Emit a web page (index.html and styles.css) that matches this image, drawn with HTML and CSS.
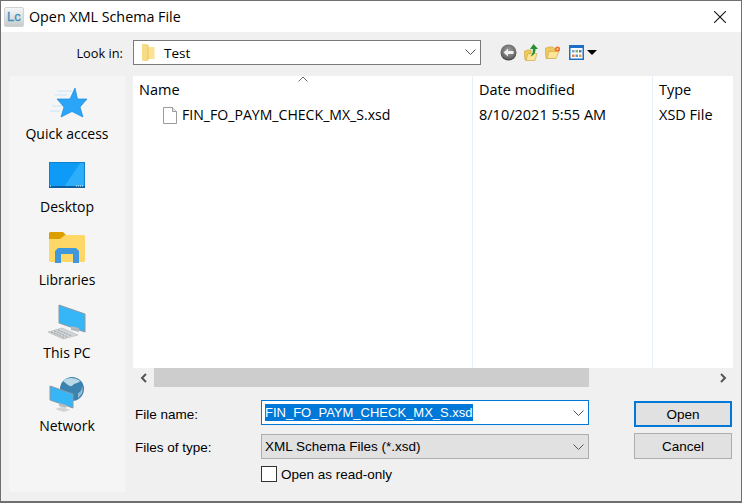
FILE: index.html
```html
<!DOCTYPE html>
<html lang="en">
<head>
<meta charset="utf-8">
<title>Open XML Schema File</title>
<link rel="stylesheet" href="styles.css">
</head>
<body>
<div class="window">
  <header class="titlebar">
    <svg class="app-icon" width="20" height="20" viewBox="0 0 20 20">
      <defs><linearGradient id="lc" x1="0" y1="0" x2="0" y2="1"><stop offset="0" stop-color="#f6f8f8"/><stop offset="1" stop-color="#c5cbcc"/></linearGradient></defs>
      <rect x="0.5" y="0.500" width="19" height="19" rx="1.500" fill="url(#lc)" stroke="#cfd3d4"/>
      <text class="app-letters" x="3" y="14">Lc</text>
    </svg>
    <span class="title">Open XML Schema File</span>
    <svg class="close" width="12" height="12" viewBox="0 0 12 12"><path d="M0 0l12 12M12 0L0 12" stroke="#111" stroke-width="1.100"/></svg>
  </header>
  <div class="toolbar">
    <span class="lookin-label">Look in:</span>
    <div class="lookin">
      <svg class="tree-folder" width="13" height="17" viewBox="0 0 13 17"><path d="M0 0h5l1 1v16H1l-1-1z" fill="#f8dc85"/><path d="M6 3h6.500v12H6z" fill="#fbe391"/><path d="M6 1v15" stroke="#e8c566"/></svg>
      <span class="lookin-text">Test</span>
      <svg class="chev" width="11" height="6" viewBox="0 0 11 6"><path d="M.5.500l5 5 5-5" fill="none" stroke="#555"/></svg>
    </div>
    <div class="tools">
      <svg width="17" height="17" viewBox="0 0 17 17"><defs><radialGradient id="bk" cx=".5" cy=".4" r=".65"><stop offset="0" stop-color="#a5a5a5"/><stop offset=".7" stop-color="#6a6a6a"/><stop offset="1" stop-color="#2e2e2e"/></radialGradient></defs><circle cx="8.500" cy="8.500" r="8" fill="url(#bk)"/><path d="M3.500 8.500l4.500-4v2.600h5.500v2.800H8v2.600z" fill="#f0f0f0"/></svg>
      <svg width="14" height="17" viewBox="0 0 14 17"><path d="M0 7h2l1-1h4v10H1z" fill="#f0c95e" stroke="#c9a23f" stroke-width=".6"/><path d="M2 16.500l2-7h9l-2 7z" fill="#fbe596" stroke="#c9a23f" stroke-width=".6"/><path d="M9.500 0l4.500 5h-2.500c0 4-1.200 6-5 7.500 2-2.500 2.500-4.500 2.300-7.500H6z" fill="#23912c"/></svg>
      <svg width="16" height="13" viewBox="0 0 16 13"><path d="M0 2h2l1-1h5l2 2v9.500H1z" fill="#f0c95e" stroke="#c9a23f" stroke-width=".6"/><path d="M2 12.500l2-7h10l-3 7z" fill="#fbe596" stroke="#c9a23f" stroke-width=".6"/><circle cx="12.500" cy="3" r="2.600" fill="#f0702e"/><circle cx="12.500" cy="3" r="1" fill="#fbd9a0"/></svg>
      <svg class="views" width="15" height="15" viewBox="0 0 15 15"><rect x=".75" y=".75" width="13.500" height="13.500" fill="#fff" stroke="#1d6fc4" stroke-width="1.500"/><rect x="1" y="1" width="13" height="2" fill="#1d6fc4"/><rect x="3" y="5" width="2.500" height="2.500" fill="#7ca6c9"/><rect x="6.500" y="5" width="2.500" height="2.500" fill="#7fb85a"/><rect x="10" y="5" width="2.500" height="2.500" fill="#4f7db8"/><rect x="3" y="9.500" width="2.500" height="2.500" fill="#e5804a"/><rect x="6.500" y="9.500" width="2.500" height="2.500" fill="#4f9ad0"/><rect x="10" y="9.500" width="2.500" height="2.500" fill="#e0a040"/></svg>
      <svg class="caret" width="10" height="5" viewBox="0 0 10 5"><path d="M0 0h10L5 5z" fill="#000"/></svg>
    </div>
  </div>
  <div class="main">
    <nav class="places">
      <div class="place">
        <svg class="place-icon" viewBox="0 0 38 36"><path d="M9 6h15M7 10h12M4 21h11M2 26h10" stroke="#c6e5fa" stroke-width="1"/><path d="M27 3l2.500 11H39l-7 8 3 10-11-5.500L13 32l3-10-7-8h13z" fill="#2aa5f7" stroke="#1c88dc" stroke-width=".7"/></svg>
        <span>Quick access</span>
      </div>
      <div class="place">
        <svg class="place-icon" viewBox="0 0 38 36"><rect x="1" y="4" width="36" height="25" fill="#0e9bf7"/><path d="M16 29L33 4h4v25z" fill="#2daefa"/><rect x="1" y="4" width="36" height="1" fill="#0f82cc"/><rect x="1" y="4" width="1" height="25" fill="#0f82cc"/><rect x="36" y="4" width="1" height="25" fill="#0f82cc"/><rect x="1" y="28" width="36" height="2" fill="#0b5f9e"/><path d="M2 28h1M28 28h8" stroke="#e8f4fb" stroke-dasharray="1 1"/></svg>
        <span>Desktop</span>
      </div>
      <div class="place">
        <svg class="place-icon" viewBox="0 0 38 36"><path d="M1 2l1-1h13l3 3v5H1z" fill="#dd9e00"/><path d="M1 8h11l5-4h19l1 1v25l-1 1H2l-1-1z" fill="#fed766"/><path d="M7 32V20l3-3h18l3 3v12h-6v-9H13v9z" fill="#3f98dc"/></svg>
        <span>Libraries</span>
      </div>
      <div class="place">
        <svg class="place-icon" viewBox="0 0 38 36"><path d="M11 1l26 9v18l-26-9z" fill="#36b5f7" stroke="#8a9aa5"/><path d="M23 22l8 2v4l-8-2z" fill="#b0b8bc"/><path d="M0 28l14-4 16 7-15 4z" fill="#d2d6d8" stroke="#aeb3b6" stroke-width=".6"/><path d="M6 27l14 6M3 28l14 6M10 26l14 6" stroke="#9aa0a4" stroke-dasharray="2 1"/></svg>
        <span>This PC</span>
      </div>
      <div class="place">
        <svg class="place-icon" viewBox="0 0 38 36"><circle cx="24" cy="12" r="12" fill="#3c82ae"/><path d="M15 4c4-4 12-4 17 0-2 3-5 1-8 5-3 1-6-3-9-5z" fill="#b8d9e8"/><path d="M30 16c3-1 4-4 4-7 2 5 0 9-4 12z" fill="#8fbdd4"/><path d="M2 9l23 8v14L2 23z" fill="#36b5f7" stroke="#8a9aa5"/><path d="M11 26l7 2v3l-7-2z" fill="#b6bdc1"/><path d="M7 32l7-2 8 3-6 2z" fill="#cfd4d6"/></svg>
        <span>Network</span>
      </div>
    </nav>
    <div class="content">
      <section class="list">
        <div class="columns">
          <div class="col col-name">
            <div class="head">Name</div>
            <div class="cell file">
              <svg width="14" height="17" viewBox="0 0 14 17"><path d="M.5.500h9l4 4v12H.5z" fill="#fff" stroke="#9a9a9a"/><path d="M9.500.500v4h4" fill="#eee" stroke="#9a9a9a"/></svg>
              <span class="file-name">FIN_FO_PAYM_CHECK_MX_S.xsd</span>
            </div>
            <svg class="sort" width="10" height="6" viewBox="0 0 10 6"><path d="M.5 5.500L5 1l4.500 4.500" fill="none" stroke="#666"/></svg>
          </div>
          <div class="col col-date">
            <div class="head">Date modified</div>
            <div class="cell">8/10/2021 5:55 AM</div>
          </div>
          <div class="col col-type">
            <div class="head">Type</div>
            <div class="cell">XSD File</div>
          </div>
        </div>
      </section>
      <div class="hscroll">
        <div class="arrow"><svg width="8" height="10" viewBox="0 0 8 10"><path d="M6 1L2 5l4 4" fill="none" stroke="#555" stroke-width="2"/></svg></div>
        <div class="thumb"></div>
        <div class="track"></div>
        <div class="arrow"><svg width="8" height="10" viewBox="0 0 8 10"><path d="M2 1l4 4-4 4" fill="none" stroke="#555" stroke-width="2"/></svg></div>
      </div>
      <div class="form">
        <label class="form-label">File name:</label>
        <div class="field field-name">
          <span class="selected">FIN_FO_PAYM_CHECK_MX_S.xsd</span>
          <svg class="chev" width="11" height="6" viewBox="0 0 11 6"><path d="M.5.500l5 5 5-5" fill="none" stroke="#555"/></svg>
        </div>
        <button class="btn btn-default">Open</button>
        <label class="form-label">Files of type:</label>
        <div class="field field-type">
          <span>XML Schema Files (*.xsd)</span>
          <svg class="chev" width="11" height="6" viewBox="0 0 11 6"><path d="M.5.500l5 5 5-5" fill="none" stroke="#555"/></svg>
        </div>
        <button class="btn btn-cancel">Cancel</button>
        <div class="readonly"><span class="box"></span><span>Open as read-only</span></div>
      </div>
    </div>
  </div>
</div>
</body>
</html>
```
FILE: styles.css
```css
* { box-sizing: border-box; }
html, body { margin: 0; padding: 0; }
body { width: 742px; height: 503px; overflow: hidden; font-family: "Open Sans", "Noto Sans", sans-serif; font-size: 14px; color: #000; }
.window { width: 742px; height: 503px; border: 1px solid #6f6f6f; border-bottom-width: 2px; background: #f0f0f0; display: flex; flex-direction: column; }
.titlebar { height: 31px; background: #fff; display: flex; align-items: center; padding: 0 15px 0 3px; flex: none; }
.app-icon { margin-right: 5px; }
.app-letters { font-family: "Liberation Sans", sans-serif; font-size: 13px; fill: #3f8fc0; stroke: #3f8fc0; stroke-width: 0.3px; }
.title { font-size: 14.300px; flex: 1; }
.toolbar { height: 44px; flex: none; display: flex; align-items: center; padding-bottom: 4px; }
.lookin-label { width: 132px; text-align: right; padding: 2px 10px 0 0; font-size: 12.800px; flex: none; }
.lookin { width: 348px; height: 25px; background: #fff; border: 1px solid #7a7a7a; display: flex; align-items: center; padding: 0 4px 0 8px; }
.tree-folder { margin-right: 9px; }
.lookin-text { flex: 1; font-size: 13.500px; padding-top: 2px; }
.tools { display: flex; align-items: center; margin-left: 19px; gap: 7px; }
.views { margin-left: 1px; }
.caret { margin-left: -4px; }
.main { flex: 1; display: flex; min-height: 0; }
.places { width: 116px; margin-left: 8px; background: #f5f5f5; display: flex; flex-direction: column; align-items: center; flex: none; height: 416px; padding-top: 9px; }
.place { height: 73px; display: flex; flex-direction: column; align-items: center; flex: none; }
.place-icon { width: 38px; height: 36px; overflow: visible; flex: none; }
.place span { font-size: 14px; line-height: 20px; margin-top: 3px; }
.content { flex: 1; display: flex; flex-direction: column; margin-left: 8px; margin-right: 8px; min-width: 0; }
.list { height: 292px; background: #fff; flex: none; }
.columns { display: flex; height: 100%; }
.col { height: 100%; border-right: 1px solid #e6f0fa; position: relative; padding-left: 6px; flex: none; }
.col-name { width: 340px; }
.col-date { width: 180px; }
.col-type { flex: 1; border-right: 0; }
.head { height: 27px; line-height: 27px; font-size: 14.500px; }
.cell { height: 24px; line-height: 24px; font-size: 14.500px; white-space: nowrap; }
.file { display: flex; align-items: center; padding-left: 24px; gap: 5px; }
.file-name { font-size: 14.100px; }
.sort { position: absolute; left: 165px; top: 0; }
.hscroll { height: 19px; display: flex; flex: none; }
.arrow { width: 21px; display: flex; align-items: center; justify-content: center; flex: none; }
.thumb { width: 435px; background: #cdcdcd; }
.track { flex: 1; }
.form { display: grid; grid-template-columns: 128px 328px 45px 98px; grid-template-rows: 33px 33px 16px; margin-top: 13px; font-family: "Liberation Sans", Arial, sans-serif; font-size: 13.500px; align-items: start; }
.form-label { padding-left: 2px; grid-column: 1; margin-top: 7px; line-height: 16px; }
.field { grid-column: 2; display: flex; align-items: center; justify-content: space-between; padding-right: 4px; }
.field-name { height: 25px; background: #fff; border: 1px solid #0078d7; padding-left: 3px; }
.selected { background: #0078d7; color: #fff; line-height: 17px; font-size: 13px; }
.field-type { height: 25px; margin-top: 1px; background: #e1e1e1; border: 1px solid #adadad; padding-left: 3px; }
.btn { grid-column: 4; font: inherit; height: 26px; padding: 0; background: #e1e1e1; border: 1px solid #adadad; color: #000; }
.btn-default { border: 2px solid #0078d7; margin-top: 1px; }
.readonly { grid-column: 2; grid-row: 3; display: flex; align-items: center; gap: 4px; font-size: 13.500px; height: 16px; }
.box { width: 16px; height: 16px; background: #fff; border: 1px solid #333; flex: none; }
```
